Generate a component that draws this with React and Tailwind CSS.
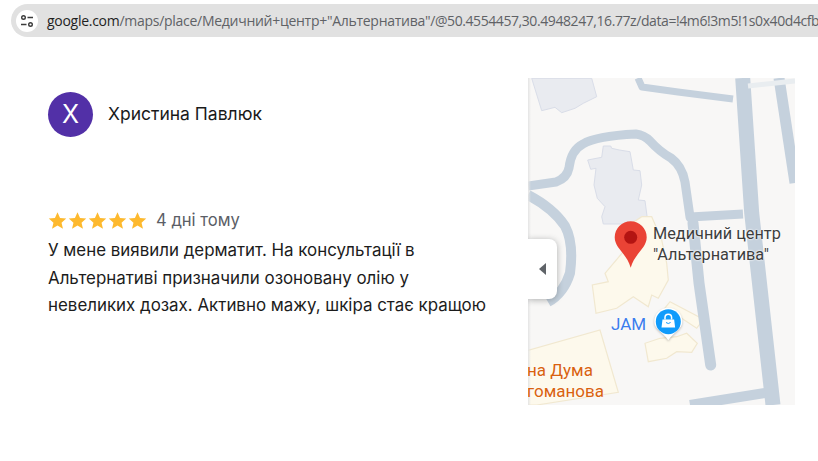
import React from "react";

const road = "#c5d1dd";
const gray = "#e9ebf0";
const grayS = "#d9dde8";
const cream = "#fdf9ec";
const creamS = "#f1e8d0";

function z3(list) {
  return list.map(([x, y]) => `${(x / 3 - 8).toFixed(1)},${(y / 3 - 8).toFixed(1)}`).join(" ");
}
function z4(list) {
  return list.map(([x, y]) => `${(x / 3 - 8).toFixed(1)},${(y / 3 + 152).toFixed(1)}`).join(" ");
}

function MapArt() {
  return (
    <svg width="267" height="327" viewBox="0 0 267 327" className="block">
      <rect width="267" height="327" fill="#f8f7f6" />
      <polygon points={z3([[35,25],[65,122],[105,112],[125,128],[165,115],[190,100],[230,80],[215,25]])} fill={gray} stroke={grayS} />
      <polygon points={z3([[203,270],[212,298],[228,295],[222,345],[232,385],[255,410],[245,440],[250,462],[360,462],[382,445],[375,392],[355,390],[365,345],[360,302],[340,300],[330,245],[298,240],[275,235],[272,228],[250,228],[245,262]])} fill={gray} stroke={grayS} />
      <polygon points={z4([[310,65],[255,130],[265,155],[217,165],[228,250],[290,235],[340,200],[385,230],[395,195],[415,205],[445,150],[440,100],[425,30],[395,-40],[365,-40],[320,-10]])} fill={cream} stroke={creamS} strokeWidth="1.2" />
      <polygon points={z4([[375,340],[385,395],[440,385],[470,365],[515,367],[532,340],[500,310],[470,320],[420,325]])} fill={cream} stroke={creamS} strokeWidth="1.2" />
      <polygon points={z4([[450,215],[550,268],[530,295],[470,255],[430,240]])} fill={cream} stroke={creamS} strokeWidth="1.2" />
      <polygon points={z4([[0,368],[240,300],[295,487],[50,525],[0,525]])} fill={cream} stroke={creamS} strokeWidth="1.2" />
      <g fill="none" stroke={road} strokeLinecap="butt" strokeLinejoin="round">
        <polyline points="110,0 114,9 150,14 205,21" strokeWidth="7" />
        <polyline points="214.7,0 223.7,135 245,327" strokeWidth="15" />
        <polyline points="251,0 267,105" strokeWidth="11" />
        <path d="M220 8 L267 3" stroke="#e9edf0" strokeWidth="5" />
        <path d="M0 108 L28 104 Q39 100 41 90 Q43 72 55 66 Q68 58 108 56 Q116 57 122 63 Q132 74 143 80 Q154 88 157 104 L162 139 L215 136" strokeWidth="9" />
        <polyline points="165,145 171,205 182.7,287" strokeWidth="11" strokeLinecap="round" />
        <path d="M0 117 Q25 130 37 148 Q46 165 42 195 Q36 215 20 224" strokeWidth="10" />
        <polyline points="162,327 237,315" strokeWidth="10" />
      </g>
      <path d="M102.7 143.3a16 16 0 0 1 16 16c0 11-12 16-16 30.4c-4-14.4-16-19.4-16-30.4a16 16 0 0 1 16-16z" fill="#ea4335" />
      <circle cx="102.7" cy="159.3" r="6.5" fill="#b31412" />
      <path d="M140.3 229.7a14 14 0 0 1 14 14c0 7-8 10-14 18.5c-6-8.5-14-11.5-14-18.5a14 14 0 0 1 14-14z" fill="#ffffff" className="drop-shadow-[0_1px_1px_rgba(0,0,0,0.25)]" />
      <circle cx="140.3" cy="243.7" r="12.5" fill="#109bfb" />
      <path d="M134.5 241.5h11.6l1 8h-13.6z" fill="#ffffff" />
      <path d="M137 241.5v-2a3.3 3.3 0 0 1 6.6 0v2" fill="none" stroke="#ffffff" strokeWidth="1.5" />
      <path d="M138 244.5q2.3 2 4.6 0" fill="none" stroke="#109bfb" strokeWidth="1" />
    </svg>
  );
}

function Star() {
  return (
    <svg width="19" height="19" viewBox="0 0 24 24" className="block shrink-0">
      <path d="M12 1.5l3.2 7.3 7.8.7-5.9 5.2 1.8 7.8L12 18.4l-6.9 4.1 1.8-7.8L1 9.5l7.8-.7z" fill="#fdb92e" />
    </svg>
  );
}

export default function App() {
  return (
    <div className="w-[818px] h-[461px] bg-white overflow-hidden" style={{ fontFamily: '"Inter", "Roboto", sans-serif' }}>
      <div className="pt-1 pl-[11px]">
        <div className="h-[33px] w-[807px] overflow-hidden rounded-l-full bg-[#e1e1e1] flex items-center pl-[5px] gap-[9px]">
          <div className="w-[22px] h-[22px] rounded-full bg-white flex items-center justify-center shrink-0">
            <svg width="14" height="14" viewBox="0 0 14 14" fill="none" stroke="#3c3c3c" strokeWidth="1.4">
              <circle cx="3.5" cy="3.5" r="1.8" />
              <path d="M7.5 3.5H13" />
              <path d="M1 10.5H6.5" />
              <circle cx="10.5" cy="10.5" r="1.8" />
            </svg>
          </div>
          <div className="whitespace-nowrap text-[14px] text-[#5f6266] tracking-[-0.28px]" style={{ fontFamily: '"Open Sans", sans-serif' }}>
            <span className="text-[#1f1f1f]">google.com</span>/maps/place/Медичний+центр+"Альтернатива"<span className="tracking-[-0.42px]">/@50.4554457,30.4948247,16.77z/data=!4m6!3m5!1s0x40d4cfb6</span>
          </div>
        </div>
      </div>

      <div className="flex mt-[41px]">
        <div className="w-[480px] ml-12">
          <div className="flex items-center gap-[15px] mt-[14px]">
            <div className="w-[45px] h-[45px] rounded-full bg-[#5230a7] text-white flex items-center justify-center text-[25px] shrink-0">Х</div>
            <div className="text-[17.5px] text-[#1a1a1a]">Христина Павлюк</div>
          </div>
          <div className="flex items-center mt-[71px] h-[24px]">
            <div className="flex gap-[1px]"><Star /><Star /><Star /><Star /><Star /></div>
            <span className="ml-[9px] text-[16.6px] text-[#5b5e66]">4 дні тому</span>
          </div>
          <p className="mt-[5px] w-[450px] text-[16.9px] leading-[27.5px] text-[#1c1c1c]">
            У мене виявили дерматит. На консультації в<br />
            Альтернативі призначили озоновану олію у<br />
            невеликих дозах. Активно мажу, шкіра стає кращою
          </p>
        </div>

        <div className="relative w-[267px] h-[327px] overflow-hidden shrink-0">
          <MapArt />
          <div className="absolute left-0 top-0 w-[3px] h-full bg-gradient-to-r from-[#e4e4e4] to-transparent" />
          <div className="absolute left-0 top-[161px] w-[29px] h-[60px] bg-white rounded-r-lg shadow-[0_1px_6px_rgba(60,64,67,0.4)] flex items-center justify-center">
            <div className="w-0 h-0 border-y-[6px] border-y-transparent border-r-[7px] border-r-[#5f6368]" />
          </div>
          <div className="absolute left-[125px] top-[145px] text-[16.3px] leading-[21px] text-[#3d3d3d] whitespace-nowrap" style={{ fontFamily: '"Roboto", sans-serif', textShadow: "0 0 2px #fff, 0 0 2px #fff" }}>
            Медичний центр<br />"Альтернатива"
          </div>
          <div className="absolute left-[83px] top-[236px] text-[17px] leading-[20px] text-[#3b7ded]" style={{ fontFamily: '"Roboto", sans-serif', textShadow: "0 0 2px #fff" }}>JAM</div>
          <div className="absolute -left-[1px] top-[282px] text-[17px] leading-[21px] text-[#d9620f] whitespace-nowrap" style={{ fontFamily: '"Roboto", sans-serif', textShadow: "0 0 2px #fff" }}>
            на Дума<br />гоманова
          </div>
        </div>
      </div>
    </div>
  );
}
